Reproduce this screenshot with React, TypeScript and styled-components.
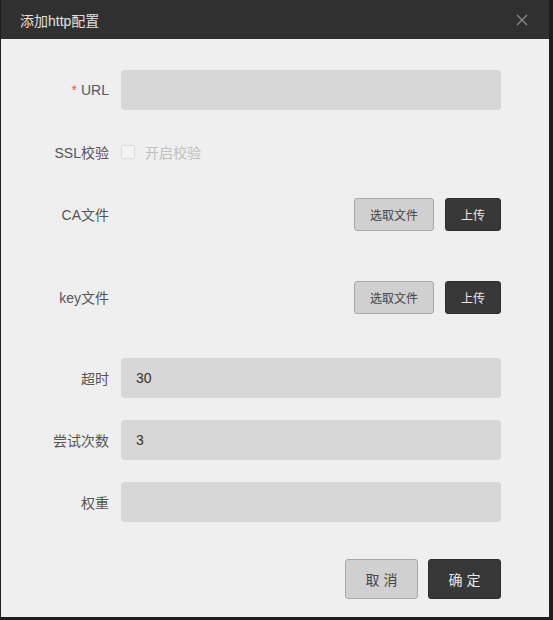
import React from 'react';
import styled, { createGlobalStyle } from 'styled-components';

const GlobalStyle = createGlobalStyle`
  html, body {
    margin: 0;
    padding: 0;
    background: #1e1e1e;
  }
  body {
    font-family: "Liberation Sans", "Noto Sans CJK SC", sans-serif;
    font-size: 14px;
  }
`;

const Dialog = styled.div`
  width: 548px;
  height: 617px;
  margin-left: 1px;
  background: #efefef;
  display: flex;
  flex-direction: column;
`;

const Header = styled.div`
  height: 39px;
  background: #303030;
  display: flex;
  align-items: center;
  justify-content: space-between;
  padding: 0 20px 0 19px;
  box-sizing: border-box;
`;

const Title = styled.span`
  color: #e2e2e2;
  font-size: 14px;
`;

const CloseButton = styled.button`
  background: none;
  border: none;
  padding: 0;
  width: 14px;
  height: 14px;
  display: flex;
  cursor: pointer;
`;

const Body = styled.div`
  padding: 31px 48px 0 0;
  display: flex;
  flex-direction: column;
  gap: 22px;
`;

const Row = styled.div<{ $extra?: number }>`
  display: grid;
  grid-template-columns: 108px 1fr;
  column-gap: 12px;
  align-items: center;
  height: 40px;
  margin-bottom: ${(p) => p.$extra ?? 0}px;
`;

const Label = styled.label`
  text-align: right;
  color: #555;
  font-size: 14px;
`;

const Required = styled.span`
  color: #e05a5a;
  margin-right: 4px;
`;

const Input = styled.input`
  height: 40px;
  border: none;
  border-radius: 4px;
  background: #d7d7d7;
  padding: 0 15px;
  font-family: inherit;
  font-size: 14px;
  color: #333;
  box-sizing: border-box;
  width: 100%;
  outline: none;
`;

const CheckWrap = styled.div`
  display: flex;
  align-items: center;
  gap: 10px;
`;

const CheckBox = styled.span`
  width: 12px;
  height: 12px;
  border: 1px solid #dcdcdc;
  border-radius: 2px;
  background: #f4f4f4;
`;

const CheckText = styled.span`
  color: #c0c0c0;
  font-size: 14px;
`;

const Actions = styled.div`
  display: flex;
  justify-content: flex-end;
  gap: 11px;
`;

const Button = styled.button<{ $dark?: boolean; $w: number; $h: number }>`
  width: ${(p) => p.$w}px;
  height: ${(p) => p.$h}px;
  border-radius: 3px;
  border: 1px solid ${(p) => (p.$dark ? '#2e2e2e' : '#a8a8a8')};
  background: ${(p) => (p.$dark ? '#383838' : '#d0d0d0')};
  color: ${(p) => (p.$dark ? '#e8e8e8' : '#444')};
  font-family: inherit;
  font-size: ${(p) => (p.$h > 35 ? 14 : 12)}px;
  letter-spacing: ${(p) => (p.$h > 35 ? 4 : 0)}px;
  padding: ${(p) => (p.$h > 35 ? '0 0 0 4px' : '0')};
  cursor: pointer;
`;

const Footer = styled.div`
  display: flex;
  justify-content: flex-end;
  gap: 10px;
  padding: 37px 48px 0 0;
`;

const CloseIcon = () => (
  <svg width="14" height="14" viewBox="0 0 14 14">
    <path d="M2 2 L12 12 M12 2 L2 12" stroke="#8a8a8a" strokeWidth="1.3" fill="none" />
  </svg>
);

const FileButtons = () => (
  <Actions>
    <Button $w={80} $h={33}>选取文件</Button>
    <Button $dark $w={56} $h={33}>上传</Button>
  </Actions>
);

const App: React.FC = () => (
  <>
    <GlobalStyle />
    <Dialog>
      <Header>
        <Title>添加http配置</Title>
        <CloseButton aria-label="close"><CloseIcon /></CloseButton>
      </Header>
      <Body>
        <Row>
          <Label><Required>*</Required>URL</Label>
          <Input />
        </Row>
        <Row>
          <Label>SSL校验</Label>
          <CheckWrap>
            <CheckBox />
            <CheckText>开启校验</CheckText>
          </CheckWrap>
        </Row>
        <Row $extra={21}>
          <Label>CA文件</Label>
          <FileButtons />
        </Row>
        <Row $extra={19}>
          <Label>key文件</Label>
          <FileButtons />
        </Row>
        <Row>
          <Label>超时</Label>
          <Input defaultValue="30" />
        </Row>
        <Row>
          <Label>尝试次数</Label>
          <Input defaultValue="3" />
        </Row>
        <Row>
          <Label>权重</Label>
          <Input />
        </Row>
      </Body>
      <Footer>
        <Button $w={73} $h={40}>取消</Button>
        <Button $dark $w={73} $h={40}>确定</Button>
      </Footer>
    </Dialog>
  </>
);

export default App;
